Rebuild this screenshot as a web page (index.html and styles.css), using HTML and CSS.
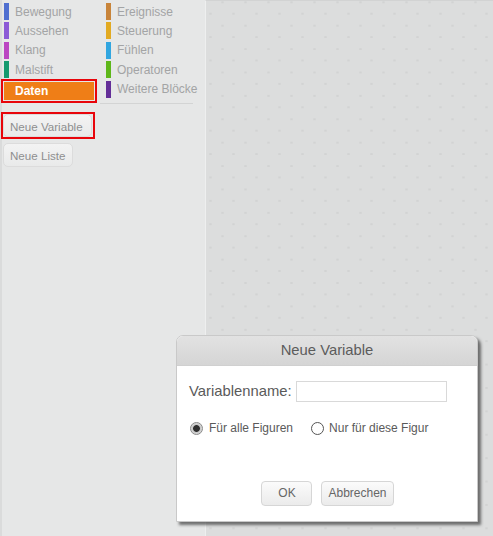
FILE: index.html
```html
<!DOCTYPE html>
<html lang="de">
<head>
<meta charset="utf-8">
<title>Neue Variable</title>
<link rel="stylesheet" href="styles.css">
</head>
<body>
<div class="app">
  <div class="palette">
    <div class="cats">
      <div class="cat"><span class="bar c-motion"></span>Bewegung</div>
      <div class="cat"><span class="bar c-looks"></span>Aussehen</div>
      <div class="cat"><span class="bar c-sound"></span>Klang</div>
      <div class="cat"><span class="bar c-pen"></span>Malstift</div>
      <div class="cat cat-active">Daten</div>
      <div class="cat"><span class="bar c-events"></span>Ereignisse</div>
      <div class="cat"><span class="bar c-control"></span>Steuerung</div>
      <div class="cat"><span class="bar c-sensing"></span>Fühlen</div>
      <div class="cat"><span class="bar c-operators"></span>Operatoren</div>
      <div class="cat"><span class="bar c-more"></span>Weitere Blöcke</div>
    </div>
    <div class="sep"></div>
    <div class="actions">
      <div class="mark"><div class="pbtn pbtn-var">Neue Variable</div></div>
      <div class="pbtn pbtn-list">Neue Liste</div>
    </div>
  </div>
  <div class="scripts"></div>
</div>

<div class="dialog">
  <div class="dlg-title">Neue Variable</div>
  <div class="dlg-body">
    <div class="name-row">
      <span class="name-label">Variablenname:</span>
      <span class="name-input"></span>
    </div>
    <div class="radio-row">
      <span class="radio radio-on"></span><span class="radio-label">Für alle Figuren</span>
      <span class="radio radio-off"></span><span class="radio-label">Nur für diese Figur</span>
    </div>
    <div class="btn-row">
      <span class="dbtn dbtn-ok">OK</span>
      <span class="dbtn">Abbrechen</span>
    </div>
  </div>
</div>
</body>
</html>
```

FILE: styles.css
```css
html, body {
  margin: 0;
  padding: 0;
}
body {
  width: 493px;
  height: 536px;
  overflow: hidden;
  font-family: "Liberation Sans", Arial, sans-serif;
  background: #e6e7e7;
}
.app {
  display: flex;
  height: 536px;
}
.palette {
  flex: none;
  width: 205px;
  box-sizing: border-box;
  background: #e6e7e7;
  border-left: 2px solid #dadbdb;
  padding-top: 3px;
}
.cats {
  display: grid;
  grid-template-columns: 102px 1fr;
  grid-template-rows: repeat(5, 19.4px);
  grid-auto-flow: column;
  padding-left: 2px;
}
.cat {
  display: flex;
  align-items: center;
  height: 17px;
  font-size: 12px;
  color: #a3a4a5;
  white-space: nowrap;
}
.bar {
  width: 5px;
  height: 17px;
  margin-right: 6px;
  flex: none;
}
.c-motion { background: #4f6fd0; }
.c-looks { background: #8c5ad6; }
.c-sound { background: #bb47c2; }
.c-pen { background: #159a6e; }
.c-events { background: #c8843a; }
.c-control { background: #e2aa22; }
.c-sensing { background: #31a6e0; }
.c-operators { background: #5eb71a; }
.c-more { background: #632e98; }
.cat-active {
  width: 90px;
  height: 18px;
  margin-top: 1px;
  box-sizing: border-box;
  padding-left: 11px;
  background: #ef7e17;
  color: #ffffff;
  font-weight: bold;
  outline: 2px solid #e8050b;
  outline-offset: 1px;
}
.sep {
  margin: 3px 0 0 98px;
  width: 93px;
  height: 1px;
  background: #d3d4d4;
}
.actions {
  display: flex;
  flex-direction: column;
  align-items: flex-start;
  gap: 4px;
  margin-top: 8px;
  padding-left: 0;
}
.mark {
  border: 2px solid #e8050b;
  padding: 0 1px 0 0;
  margin-left: -1px;
}
.pbtn {
  height: 23px;
  line-height: 23px;
  padding: 0 6px;
  font-size: 11.6px;
  color: #8e8f90;
  background: linear-gradient(#f3f3f3, #e9eaea);
  border: 1px solid #dcdcdc;
  border-radius: 5px;
  box-sizing: border-box;
  white-space: nowrap;
}
.pbtn-var {
  width: 89px;
}
.pbtn-list {
  height: 24px;
  line-height: 24px;
  width: 70px;
  margin-left: 1px;
}
.scripts {
  flex: 1;
  background-color: #dcdddd;
  border-top: 1px solid #d2d3d3;
  border-left: 1px solid #eeefef;
  background-image:
    radial-gradient(circle, #d2d3d3 1px, transparent 1.4px),
    radial-gradient(circle, #d2d3d3 1px, transparent 1.4px);
  background-size: 23px 23.4px, 23px 23.4px;
  background-position: 5px 13px, 16px 1px;
}
.dialog {
  position: absolute;
  left: 176px;
  top: 335px;
  width: 302px;
  height: 187px;
  box-sizing: border-box;
  background: #ffffff;
  border: 1px solid #c9c9c9;
  border-radius: 7px 7px 0 0;
  box-shadow: 3px 3px 3px rgba(60, 60, 60, 0.7);
  display: flex;
  flex-direction: column;
}
.dlg-title {
  height: 29px;
  flex: none;
  border-radius: 6px 6px 0 0;
  background: linear-gradient(#e2e2e2, #d5d5d5);
  border-bottom: 1px solid #d0d0d0;
  text-align: center;
  line-height: 29px;
  font-size: 14.8px;
  color: #5c5c5c;
}
.dlg-body {
  flex: 1;
  display: flex;
  flex-direction: column;
  padding: 14px 0 0 11px;
}
.name-row {
  display: flex;
  align-items: center;
  height: 22px;
}
.name-label {
  font-size: 14.8px;
  color: #5a5a5a;
  margin-right: 4px;
  margin-left: 1px;
}
.name-input {
  width: 151px;
  height: 21px;
  box-sizing: border-box;
  border: 1px solid #d9d9d9;
  background: #fff;
}
.radio-row {
  display: flex;
  align-items: center;
  margin-top: 19px;
  height: 14px;
  font-size: 12px;
  color: #5a5a5a;
}
.radio {
  width: 13px;
  height: 13px;
  box-sizing: border-box;
  border-radius: 50%;
  flex: none;
  margin-right: 6px;
}
.radio-on {
  margin-left: 2px;
  border: 1px solid #8a8a8a;
  background: radial-gradient(circle, #2f2f2f 0, #2f2f2f 3px, #c7c7c7 3.8px, #dedede 6px);
}
.radio-off {
  margin-left: 18px;
  border: 1px solid #555555;
  background: #ffffff;
  margin-right: 5px;
}
.btn-row {
  display: flex;
  justify-content: center;
  gap: 9px;
  margin-top: auto;
  margin-bottom: 15px;
  margin-left: -11px;
  margin-right: -1px;
}
.dbtn {
  height: 25px;
  line-height: 23px;
  box-sizing: border-box;
  padding: 0 6px;
  border: 1px solid #d6d6d6;
  border-radius: 4px;
  background: linear-gradient(#fbfbfb, #ebebeb);
  font-size: 12px;
  color: #666666;
}
.dbtn-ok {
  width: 51px;
  text-align: center;
}
```
